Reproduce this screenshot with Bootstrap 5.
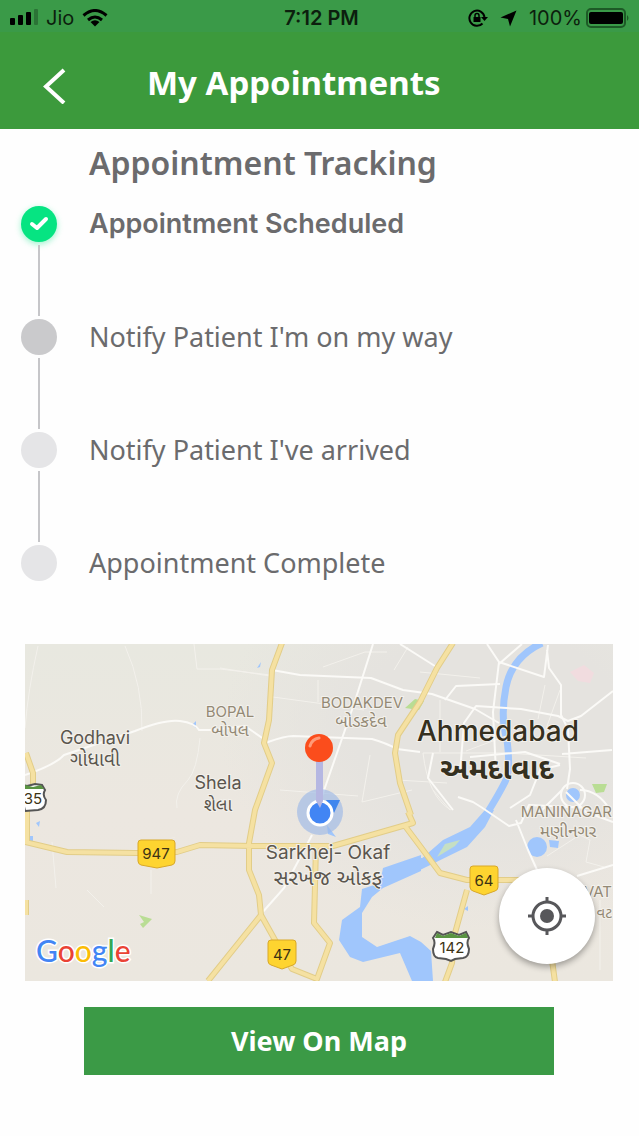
<!DOCTYPE html>
<html lang="en">
<head>
<meta charset="utf-8">
<meta name="viewport" content="width=device-width, initial-scale=1">
<title>My Appointments</title>
<link rel="stylesheet" href="https://cdn.jsdelivr.net/npm/bootstrap@5.3.0/dist/css/bootstrap.min.css">
<style>
  body { font-family: Inter, "Noto Sans", sans-serif; background: #fefefe; color: #6b6b6d; }
  .work-face { font-family: "Noto Sans", "Open Sans", sans-serif; }
  .status-bar { height: 32px; padding: 4px 10px 0; background: #3a9a48; color: #0c1f0e; font-size: 20px; line-height: 28px; }
  .status-side { flex: 1 1 0; }
  .status-time { font-size: 20px; font-weight: 600; padding-left: 4px; }
  .title-bar { height: 97px; padding: 10px 38px 0; background: #3c9a3c; color: #fff; }
  .title-bar h1 { font-size: 33px; line-height: 40px; font-weight: 700; padding-bottom: 6px; margin-left: 77px; }
  .back-btn { width: 32px; height: 48px; }
  .tracking { padding: 14px 21px 0; }
  .tracking h2 { font-size: 32px; line-height: 40px; font-weight: 600; margin: 0 0 23px 68px; }
  .step { display: flex; gap: 32px; min-height: 113px; font-size: 27px; line-height: 36px; }
  .step:last-child { min-height: 36px; }
  .rail { flex: 0 0 36px; display: flex; flex-direction: column; align-items: center; gap: 3px; padding-bottom: 3px; }
  .step:last-child .rail { padding-bottom: 0; }
  .dot { width: 36px; height: 36px; border-radius: 50%; background: #e5e5e7; }
  .dot.done { background: #06e482; box-shadow: 0 2px 6px #06e48266; }
  .dot.next { background: #cacacc; }
  .line { flex: 1; width: 2px; background: #c6c6c9; }
  .step.active { font-weight: 600; }
  .map-area { padding: 63px 26px 26px 25px; }
  .map-box svg.map { display: block; width: 100%; height: auto; }
  .locate-btn { right: 3%; bottom: 5%; width: 96px; height: 96px; box-shadow: 0 3px 6px #0005; }
  .view-btn { width: 80%; height: 68px; margin-top: 26px; background: #3b9a46; color: #fff; font-size: 27px; font-weight: 700; }
  .view-btn:hover { background: #338a3d; color: #fff; }
</style>
</head>
<body>
<header>
  <div class="status-bar d-flex align-items-center">
    <div class="status-side d-flex align-items-center">
      <svg width="28" height="18" viewBox="0 0 28 18" fill="#000" aria-hidden="true"><rect y="9" width="5" height="7" rx="1"/><rect x="8" y="6" width="5" height="10" rx="1"/><rect x="16" y="3" width="5" height="13" rx="1"/><rect x="24" y="0" width="4" height="16" rx="1" opacity=".25"/></svg>
      <span class="ms-2 me-1">Jio</span>
      <svg class="ms-1" width="26" height="18" viewBox="0 0 26 18" fill="none" stroke="#000" stroke-width="3" aria-hidden="true"><path d="M1.500 6.500Q13-3.500 24.500 6.500M6 11Q13 5 20 11"/><path d="M8.500 13Q13 9.500 17.500 13L13 17.500z" fill="#000" stroke="none"/></svg>
    </div>
    <div class="status-time">7:12 PM</div>
    <div class="status-side d-flex align-items-center justify-content-end">
      <svg class="me-2" width="20" height="18" viewBox="0 0 20 18" fill="none" stroke="#000" stroke-width="2" aria-hidden="true"><path d="M14.500 14.500A7.600 7.600 0 1 1 16.500 8"/><path d="M13 8h7l-3.500 4z" fill="#000" stroke="none"/><rect x="5.500" y="8" width="7" height="5" fill="#000" stroke="none"/><path d="M7 8V6.500a2 2 0 0 1 4 0V8" stroke-width="1.500"/></svg>
      <svg class="me-2 ms-1" width="17" height="17" viewBox="0 0 17 17" aria-hidden="true"><path d="M16.500.5L10 16.500 8 9 .5 7.500z" fill="#000"/></svg>
      <span class="ms-1 me-1">100%</span>
      <svg width="43" height="20" viewBox="0 0 43 20" aria-hidden="true"><rect x="1" y="1" width="38" height="18" rx="4" fill="none" stroke="#1d5a26" stroke-width="2"/><rect x="3" y="4" width="34" height="12" rx="2"/><path d="M41 7q3 3 0 6z" fill="#1d5a26"/></svg>
    </div>
  </div>
  <nav class="title-bar d-flex align-items-center work-face" aria-label="Page">
    <button class="back-btn btn p-0 border-0 d-flex align-items-center justify-content-center" type="button" aria-label="Back">
      <svg width="24" height="36" viewBox="0 0 24 36" fill="none" stroke="#fff" stroke-width="4"><path d="M22 2L4 18.500L22 35"/></svg>
    </button>
    <h1 class="mb-0">My Appointments</h1>
  </nav>
</header>
<main>
  <section class="tracking">
    <h2 class="work-face">Appointment Tracking</h2>
    <ol class="list-unstyled mb-0">
      <li class="step active">
        <div class="rail"><div class="dot done d-flex align-items-center justify-content-center"><svg width="20" height="16" viewBox="0 0 20 16" fill="none" stroke="#fff" stroke-width="4" stroke-linecap="round" stroke-linejoin="round"><path d="M3 8l5 4L17 3"/></svg></div><div class="line"></div></div>
        <div>Appointment Scheduled</div>
      </li>
      <li class="step work-face"><div class="rail"><div class="dot next"></div><div class="line"></div></div><div>Notify Patient I'm on my way</div></li>
      <li class="step work-face"><div class="rail"><div class="dot"></div><div class="line"></div></div><div>Notify Patient I've arrived</div></li>
      <li class="step work-face"><div class="rail"><div class="dot"></div></div><div>Appointment Complete</div></li>
    </ol>
  </section>
  <section class="map-area">
    <div class="map-box position-relative">
      <svg class="map" viewBox="25 644 588 337" role="img" aria-label="Map of Ahmedabad">
        <defs>
          <linearGradient id="land" x1="0" y1="0" x2="0" y2="1"><stop offset="0" stop-color="#e8e8e0"/><stop offset=".5" stop-color="#ece7e0"/><stop offset="1" stop-color="#ebe7df"/></linearGradient>
          <radialGradient id="city"><stop offset=".5" stop-color="#e5e3df"/><stop offset="1" stop-color="#e5e3df" stop-opacity="0"/></radialGradient>
        </defs>
        <rect x="25" y="644" width="588" height="337" fill="url(#land)"/>
        <ellipse cx="490" cy="730" rx="270" ry="200" fill="url(#city)"/>
        <path d="M570 672l14-7 10 8-4 10-12-2z" fill="#f1dcdf"/>
        <g fill="#b9dd94"><path d="M405 708l10-9 9 2-5 9zM592 784h15l-3 8-8 1zM139 915l13 4-9 9-3-4 4-2z"/></g>
        <!-- river and lakes -->
        <g fill="#a0c6fc">
          <path d="M485 810l-15 17-27 13-23 20v10l47-23 18-20 9-17z"/>
          <path d="M421 855l-38 13-3 15-18 6-2 18-18 13-3 20 11 17 13 5 37-9 12 28h21l-2-30-10-9-11-6-33 11-15-10v-24l10-16 11-9 38-17z"/>
          <path d="M424 858l-8 0v14l8-5z"/>
          <circle cx="537" cy="847" r="10"/><path d="M549 840l10 1-1 7-8-1zM327 825l9 12-8-3zM27 836h6v5h-6zM36 823l4-2-1 6zM192 725l4-4v7zM257 668l4-6-1 5zM464 909l4-3v5z"/>
          <circle cx="573" cy="795" r="7"/>
        </g>
        <path d="M542 643Q512 657 506 687T507 740Q511 770 505 782T486 815" fill="none" stroke="#a0c6fc" stroke-width="7"/>
        <path d="M437 857l8-13 15-4-5 6z" fill="#c5dfc4"/>
        <!-- faint roads -->
        <g fill="none" stroke="#f3f1ec" stroke-width="1">
          <path d="M38 646Q28 690 25 728M125 646q18 40 17 85M194 644l3 25h23l50 6M200 738q-3 32-12 42-14 14-11 28M52 842l4 46M151 870v24M87 890l17 17"/>
          <path d="M220 668l50 8M273 697l44 6 47 7M318 680v22M323 667l42-15h22M408 647l-14 23M370 755l-8 47 50-12M397 780l50 3M280 790l78 6M420 672l60 6M423 753h83l80 5M423 753q5 44 28 57M450 810l-17-20M506 736l-40 15M440 700v52M545 685l-7 34M560 690l-18 50M570 830l20 10-4 22 18 5M575 838l-28 18M600 900v70"/>
          <path d="M25 842q80 25 150-5" opacity=".4"/>
        </g>
        <!-- city roads -->
        <g fill="none" stroke="#fbfaf7" stroke-width="2" stroke-linejoin="round">
          <path d="M25 775Q55 765 64 755L135 731Q165 719 180 721T199 730H212L245 726 268 742Q285 736 293 736L372 739Q386 743 397 749L420 752"/>
          <path d="M373 644L354 704 321 799M312 835L284 888 261 914"/>
          <path d="M272 670L300 675 371 678 403 690 432 694 475 709 499 723M400 644L438 668"/>
          <path d="M487 644l12 18-6 50 3 60M499 662l45 15 4-32M522 644l-23 20M547 650l2 18 12 17v30l7 14 2 40-3 20M445 700l11-14 44-2M460 773l4-50 12-17 45 3 37 7 10 5 13-5 32-25M470 757l55-5 35 12M562 754l50-4M560 765l-20 5-10 25-20 13M433 753l-5 25 25 32M458 797l15 5 8 5 28 19 12-3 8-18 60 3M516 820l12 30 10 22M566 792l20 20 27 10M562 790l-20 20M577 876l36-11M580 790q18 0 30 20"/>
          <circle cx="573" cy="795" r="12" stroke-width="2"/>
        </g>
        <!-- highways: a casing with a lighter line over it -->
        <g fill="none" stroke-linejoin="round">
          <g stroke="#e2cd88" stroke-width="6"><path id="roads" d="M282 643L272 670 269 720 264 743 272 763 255 810 249 843V870L259 895 261 915 208 981M261 915L275 940 292 969 317 979 330 943 314 923 316 846M25 842L67 852 137 853 177 852 200 845 253 846H333L413 823 408 812M405 826L420 846 440 873 467 880H520M467 890L455 933 452 963 445 982M552 960L555 982M453 643L437 668 420 702 398 735 395 753 400 783 411 815M26 753L33 773V784M27 810V842M26 900v15"/></g>
          <use href="#roads" stroke="#f5e1a2" stroke-width="4"/>
        </g>
        <!-- road shields -->
        <g font-family="Inter, sans-serif" font-size="15" text-anchor="middle" fill="#3c3214">
          <g fill="#fed430" stroke="#d8a829" stroke-width="1">
            <path d="M141 840h31q3 0 3 3v18q0 3-3 4l-15 3-16-3q-3-1-3-4v-18q0-3 3-3z"/>
            <path d="M271 940h22q3 0 3 3v18q0 3-3 4l-11 4-11-4q-3-1-3-4v-18q0-3 3-3z"/>
            <path d="M473 866h22q3 0 3 3v18q0 3-3 4l-11 4-11-4q-3-1-3-4v-18q0-3 3-3z"/>
          </g>
          <text x="156" y="859">947</text><text x="282" y="960">47</text><text x="484" y="886">64</text>
          <g fill="#fff" stroke="#555" stroke-width="2">
            <path d="M437 932l6 3 8-3 8 3 7-3 3 6q-3 4 0 11 0 8-6 9l-8 1-4 2-5-2-8-1q-5-1-5-9 3-7 0-11z"/>
            <path d="M19 784l8 2 8-2 7 1 3 5q-3 5 1 10 0 9-8 10l-13 1z"/>
          </g>
          <path d="M437 933l6 3 8-3 8 3 7-3 2 5h-33zM25 785l8 2 8-2 3 4H25z" fill="#5a9442"/>
          <text x="452" y="953">142</text><text x="33" y="804">35</text>
        </g>
        <!-- place names -->
        <g font-family="Inter, 'Noto Sans Gujarati', 'Noto Sans', sans-serif" text-anchor="middle" fill="#5b564e" stroke="#f3f1ec" stroke-width="2" paint-order="stroke" font-size="18">
          <text x="95" y="744">Godhavi</text><text x="95" y="766" font-size="19">ગોધાવી</text>
          <text x="218" y="789">Shela</text><text x="218" y="811">શેલા</text>
          <text x="328" y="859" font-size="19">Sarkhej- Okaf</text><text x="328" y="885" font-size="21">સરખેજ ઓકફ</text>
          <g fill="#938975" font-size="15"><text x="230" y="717">BOPAL</text><text x="230" y="736" font-size="17">બોપલ</text>
          <text x="362" y="708">BODAKDEV</text><text x="361" y="727" font-size="17">બોડકદેવ</text>
          <text x="612" y="817" text-anchor="end">MANINAGAR</text><text x="568" y="837" font-size="17">મણીનગર</text>
          <text x="612" y="897" text-anchor="end">VAT</text><text x="612" y="918" text-anchor="end">વટ</text></g>
          <g fill="#35301f" font-weight="500" font-size="28"><text x="498" y="741">Ahmedabad</text><text x="497" y="779" font-size="30" font-weight="700">અમદાવાદ</text></g>
        </g>
        <g font-family="Lato, sans-serif" font-size="30" font-weight="500" stroke="#fff" stroke-width="3" paint-order="stroke"><text x="36" y="962"><tspan fill="#4285f4">G</tspan><tspan fill="#ea4335">o</tspan><tspan fill="#fbbc05">o</tspan><tspan fill="#4285f4">g</tspan><tspan fill="#34a853">l</tspan><tspan fill="#ea4335">e</tspan></text></g>
        <!-- current position and pin -->
        <circle cx="320" cy="812" r="23" fill="#9db9e6" opacity=".65"/>
        <path d="M326 800h14l-6 13z" fill="#3f86ee"/>
        <circle cx="320" cy="813" r="12" fill="#4285f4" stroke="#fff" stroke-width="3"/>
        <path d="M316 758h7v43l-3 7-4-7z" fill="#b5b7e2"/>
        <circle cx="319" cy="748" r="14" fill="#fb4d1c"/>
        <path d="M310 746q2-7 9-8" fill="none" stroke="#ff9a78" stroke-width="3" stroke-linecap="round"/>
      </svg>
      <button class="locate-btn btn btn-light bg-white border-0 rounded-circle position-absolute p-0" type="button" aria-label="My location">
        <svg width="38" height="38" viewBox="0 0 38 38" fill="none" stroke="#57575a" stroke-width="3"><circle cx="19" cy="19" r="14"/><circle cx="19" cy="19" r="7" fill="#57575a" stroke="none"/><path d="M19 0v6M19 32v6M0 19h6M32 19h6"/></svg>
      </button>
    </div>
    <button class="view-btn btn rounded-0 border-0 d-block mx-auto work-face" type="button">View On Map</button>
  </section>
</main>
<script src="https://cdn.jsdelivr.net/npm/bootstrap@5.3.0/dist/js/bootstrap.bundle.min.js"></script>
</body>
</html>
